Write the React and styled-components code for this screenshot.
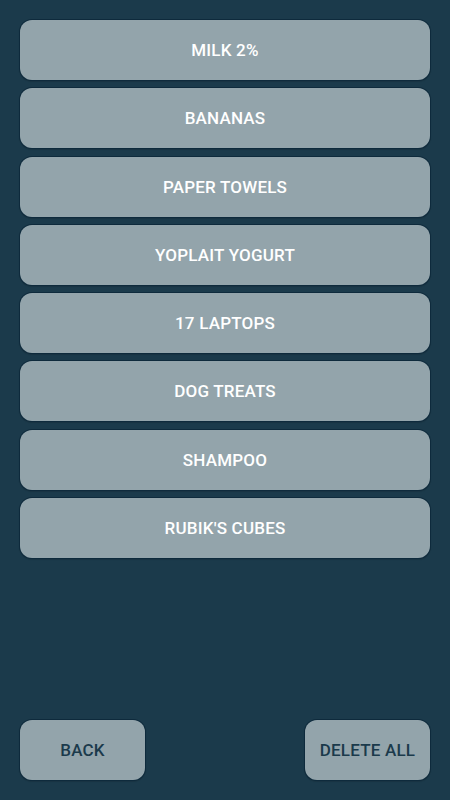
import React from "react";
import styled, { createGlobalStyle } from "styled-components";

const GlobalStyle = createGlobalStyle`
  html, body {
    margin: 0;
    padding: 0;
    background: #1b3a4b;
    font-family: Roboto, "Liberation Sans", sans-serif;
  }
`;

const Screen = styled.div`
  height: 800px;
  box-sizing: border-box;
  padding: 20px;
  display: flex;
  flex-direction: column;
  justify-content: space-between;
  background: #1b3a4b;
`;

const List = styled.div`
  display: flex;
  flex-direction: column;
  gap: 8.3px;
`;

const Pill = styled.button`
  height: 60px;
  width: ${(p) => (p.narrow ? "125px" : "100%")};
  box-sizing: border-box;
  border: none;
  border-radius: 12px;
  background: #93a4ab;
  color: ${(p) => (p.dark ? "#1b3a4b" : "#ffffff")};
  font-family: Roboto, "Liberation Sans", sans-serif;
  font-weight: 500;
  font-size: 17px;
  letter-spacing: 0.2px;
  text-transform: uppercase;
  display: flex;
  align-items: center;
  justify-content: center;
  padding: 0;
  box-shadow: 0 0 0 1px #0e2a3c, 0 1px 1px 1px rgba(0, 0, 0, 0.12);
  cursor: pointer;
`;

const Footer = styled.div`
  display: flex;
  justify-content: space-between;
`;

const items = [
  "Milk 2%",
  "Bananas",
  "Paper Towels",
  "Yoplait Yogurt",
  "17 Laptops",
  "Dog Treats",
  "Shampoo",
  "Rubik's Cubes",
];

export default function App() {
  return (
    <>
      <GlobalStyle />
      <Screen>
        <List>
          {items.map((item) => (
            <Pill key={item}>{item}</Pill>
          ))}
        </List>
        <Footer>
          <Pill narrow dark>Back</Pill>
          <Pill narrow dark>Delete All</Pill>
        </Footer>
      </Screen>
    </>
  );
}
